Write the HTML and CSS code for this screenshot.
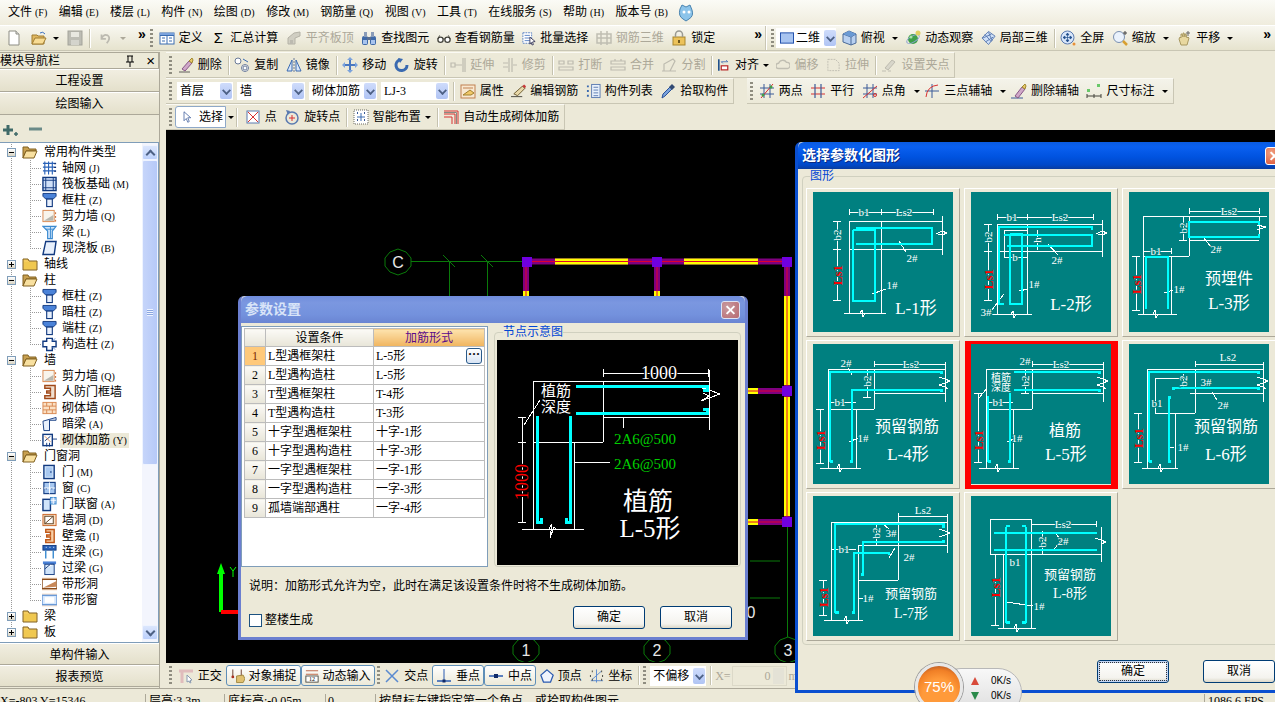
FILE: index.html
```html
<!DOCTYPE html>
<html lang="zh-CN">
<head>
  <meta charset="UTF-8">
  <title>钢筋算量</title>
  <link rel="stylesheet" href="styles.css">
</head>
<body>

<!-- icon set -->
<svg class="defs">
  <defs>
    <!-- top toolbar -->
    <g id="i-new"><path d="M3 1h7l3 3v11H3z" fill="#fff" stroke="#8d8d84"/><path d="M10 1v3h3" fill="#ddd" stroke="#8d8d84"/></g>
    <g id="i-open"><path d="M1 5h5l1 1h6v8H1z" fill="#e0b860" stroke="#a07c30"/><path d="M1 14l3-6h11l-3 6z" fill="#f8dc94" stroke="#a07c30"/><path d="M9 3q3-2 5 1" fill="none" stroke="#3a70c0"/></g>
    <g id="i-save"><rect x="1" y="1" width="14" height="14" fill="#bdbdb4" stroke="#a3a39a"/><rect x="4" y="2" width="8" height="5" fill="#e8e8e0"/><rect x="4" y="10" width="8" height="5" fill="#d4d4cc"/></g>
    <g id="i-undo"><path d="M4 4v5h5" fill="none" stroke="#bcbab0" stroke-width="2"/><path d="M4 8q3-5 7-3 3 2 1 6l-2 3" fill="none" stroke="#bcbab0" stroke-width="2"/></g>
    <g id="i-def"><rect x="1" y="3" width="14" height="11" fill="#fff" stroke="#3a6cb0"/><path d="M1 5.500h14M8 3v11M3 8h3M3 11h3M10 8h3M10 11h3" stroke="#3a6cb0"/><rect x="1" y="3" width="14" height="2" fill="#7aa2dc"/></g>
    <g id="i-flush"><path d="M2 14V8l6-5 6-1v4l-5 2v6z" fill="#d0cec2" stroke="#b4b2a6"/><path d="M4 10h3v4H4z" fill="#bcbab0"/></g>
    <g id="i-find"><rect x="1" y="6" width="6" height="9" rx="2" fill="#3f6aa8"/><rect x="9" y="6" width="6" height="9" rx="2" fill="#3f6aa8"/><rect x="3" y="2" width="3" height="5" fill="#8a9cb8"/><rect x="10" y="2" width="3" height="5" fill="#8a9cb8"/><rect x="6" y="7" width="4" height="3" fill="#5a6f90"/><rect x="2" y="10" width="4" height="4" fill="#a8c4ee"/><rect x="10" y="10" width="4" height="4" fill="#a8c4ee"/></g>
    <g id="i-glass"><circle cx="4" cy="10" r="3" fill="#fff" stroke="#44443c" stroke-width="1.500"/><circle cx="12" cy="10" r="3" fill="#fff" stroke="#44443c" stroke-width="1.500"/><path d="M7 9h2M1 9l2-4M15 9l-2-4" stroke="#44443c"/></g>
    <g id="i-batch"><rect x="1" y="2" width="10" height="12" fill="#fff" stroke="#4a78c0" stroke-dasharray="2 1"/><path d="M3 5h6M3 8h6M3 11h6" stroke="#4a78c0"/><path d="M9 7l6 5-3 .5 1 3-1.500 .5-1-3-1.500 2z" fill="#fff" stroke="#335"/></g>
    <g id="i-r3d"><path d="M1 4h14v9H1zM1 8h14M5 1v14M11 1v14" fill="none" stroke="#c0beb2" stroke-width="1.500"/></g>
    <g id="i-lock"><rect x="2" y="7" width="12" height="8" fill="#ecc25a" stroke="#a8862e"/><path d="M4.500 7V4.500a3.500 3.500 0 0 1 7 0V7" fill="none" stroke="#9a9a92" stroke-width="1.500"/><rect x="7" y="10" width="2" height="3" fill="#70581c"/></g>
    <g id="i-2d"><rect x="1" y="2" width="14" height="11" fill="#a8c4f0" stroke="#1a4aa8"/></g>
    <g id="i-top"><path d="M8 1l7 3v9l-5 2-8-3V4z" fill="#b8d0f0" stroke="#4a6a98"/><path d="M2 4l8 3 5-3M10 7v8" fill="none" stroke="#4a6a98"/><path d="M2 4l6-3 7 3-5 3z" fill="#6a9ad4"/></g>
    <g id="i-orbit"><ellipse cx="8" cy="9" rx="5" ry="5" fill="#3fa048"/><ellipse cx="8" cy="9" rx="7" ry="3" fill="none" stroke="#88a0d0" transform="rotate(-30 8 9)"/><circle cx="13" cy="3" r="2.500" fill="#e0d060"/><circle cx="6" cy="7" r="1.500" fill="#a8e0a8"/></g>
    <g id="i-local"><path d="M8 1l7 5-7 9-7-7z" fill="#cfe0f8" stroke="#5a7ab0"/><path d="M4 4l7 8M8 2l4 9M2 8l9-4M5 12l8-5" stroke="#5a7ab0"/></g>
    <g id="i-full"><circle cx="7.500" cy="7.500" r="6.500" fill="#d8e6fa" stroke="#5a7ab0"/><path d="M7.500 3v9M3 7.500h9M7.500 3l-1.500 2h3zM7.500 12l-1.500-2h3zM3 7.500l2-1.500v3zM12 7.500l-2-1.500v3z" fill="#24508c" stroke="#24508c" stroke-width=".7"/><circle cx="14" cy="14" r="1.500" fill="#e89038"/></g>
    <g id="i-zoom"><circle cx="7" cy="7" r="5.500" fill="#eaf2fc" stroke="#7a90b0"/><path d="M11 11l4 4" stroke="#d8a030" stroke-width="2.500"/><path d="M13 1v4M11 3h4" stroke="#444"/></g>
    <g id="i-pan"><path d="M3 9l1-2 1 1V4l1 0 1 3V3l1 0 1 4V4l1 0 1 4 1-1 1 1-2 7H5z" fill="#e8d8a0" stroke="#a89860"/><path d="M12 1v5M10 3h4" stroke="#666"/></g>
    <!-- edit toolbar -->
    <g id="i-del"><path d="M1 15h11" stroke="#60605a"/><path d="M4 12l7-8 3 2-7 8z" fill="#d0a8c8" stroke="#885888"/><path d="M11 4l3-3 1 2-1 3z" fill="#e8c868" stroke="#a08830"/></g>
    <g id="i-copy"><circle cx="4" cy="4" r="3" fill="#fff" stroke="#6a7a98"/><circle cx="11" cy="11" r="3.500" fill="#fff" stroke="#6a7a98"/><circle cx="11" cy="11" r="2" fill="none" stroke="#6a7a98"/><path d="M9 2l5 3" stroke="#3a6ab0"/></g>
    <g id="i-mirror"><path d="M8 1v14" stroke="#6a7a98" stroke-dasharray="2 1"/><path d="M6 3L1 14h5zM10 3l5 11h-5z" fill="#d8e6fa" stroke="#3a6ab0"/></g>
    <g id="i-move"><path d="M8 1v14M1 8h14" stroke="#4a78c0" stroke-width="2"/><path d="M8 0l-3 3h6zM8 16l-3-3h6zM0 8l3-3v6zM16 8l-3-3v6z" fill="#7aa2dc"/></g>
    <g id="i-rot"><path d="M13 8a5.500 5.500 0 1 1-7-5.200" fill="none" stroke="#3a6ab0" stroke-width="3"/><path d="M4 1l5 1-3 4z" fill="#3a6ab0"/></g>
    <g id="i-ext" fill="none" stroke="#bdbbaf"><path d="M13 1v14M15 1v14M1 6h4v4H1zM5 8h7" stroke-width="1.200"/></g>
    <g id="i-trim" fill="none" stroke="#bdbbaf"><path d="M7 1v14M10 1v14M1 6h5M1 10h5M11 8h4" stroke-width="1.200"/></g>
    <g id="i-break" fill="none" stroke="#bdbbaf"><path d="M1 4h5v3H1zM10 4h5v3h-5zM1 10h14v3H1z" stroke-width="1.200"/></g>
    <g id="i-merge" fill="none" stroke="#bdbbaf"><path d="M1 4h14v3H1zM1 10h14v3H1zM5 2v2M11 2v2" stroke-width="1.200"/></g>
    <g id="i-split" fill="none" stroke="#bdbbaf"><path d="M1 14h14M3 14V7l9-5 2 2-5 10" stroke-width="1.200"/></g>
    <g id="i-align"><path d="M1 1v14" stroke="#20508c" stroke-width="2"/><path d="M4 4h8l-2-2M4 4l2 2" fill="none" stroke="#3a6ab0"/><rect x="4" y="9" width="8" height="5" fill="#fff" stroke="#b82828" stroke-width="1.500"/></g>
    <g id="i-offset"><path d="M3 12a3 3 0 0 1 0-6 5 5 0 0 1 9-1 3.500 3.500 0 0 1 1 7z" fill="none" stroke="#c0beb2" stroke-width="1.500"/></g>
    <g id="i-stretch"><path d="M2 2h8l4 4v8H2z" fill="none" stroke="#c0beb2" stroke-dasharray="2 1"/></g>
    <g id="i-gripdot"><path d="M1 14h4M7 14h3" stroke="#c0beb2"/><path d="M4 11l7-8 3 2-7 8z" fill="#d8d6ca" stroke="#bdbbaf"/></g>
    <!-- property toolbar -->
    <g id="i-prop"><rect x="1" y="2" width="14" height="13" fill="#f8e8d0" stroke="#c08050"/><path d="M3 5h10" stroke="#c08050"/><path d="M3 12l7-5 4 3-3 2z" fill="#f0c868" stroke="#a08030"/></g>
    <g id="i-edit"><path d="M0 14h12" stroke="#44443c"/><path d="M3 11L12 3l3 2-8 8z" fill="#e8d8a8" stroke="#6a5a30"/><path d="M12 3l2-2 2 2-1 2z" fill="#c83838"/></g>
    <g id="i-list"><path d="M1 3h2M1 8h2M1 13h2" stroke="#3a6ab0" stroke-width="2"/><rect x="6" y="1" width="9" height="14" fill="#eaf2fc" stroke="#5a7ab0"/><path d="M8 4h5M8 7h5M8 10h5M8 13h5" stroke="#5a7ab0"/></g>
    <g id="i-pick"><path d="M2 15l1-4 7-7 2 2-7 7z" fill="#7aa2dc" stroke="#2a5298"/><path d="M9 4l3-3 3 3-3 3z" fill="#324a72"/></g>
    <g id="i-2pt"><path d="M1 5h14M1 11h14M5 1v14M11 1v14" stroke="#3a5a98"/><path d="M2 15L14 1" stroke="#d83030"/><circle cx="4" cy="12" r="1.500" fill="#3fa048"/><circle cx="12" cy="4" r="1.500" fill="#3fa048"/></g>
    <g id="i-par"><path d="M1 5h14M1 11h14" stroke="#d83030" stroke-width="1.200"/><path d="M5 1v14M11 1v14" stroke="#3a5a98" stroke-width="1.200"/></g>
    <g id="i-ang"><path d="M1 5h14M1 11h14M5 1v14M11 1v14" stroke="#3a5a98"/><path d="M1 15L15 3" stroke="#d83030"/><circle cx="13" cy="12" r="1.500" fill="none" stroke="#d83030"/></g>
    <g id="i-3pt"><path d="M1 8h14M8 1v14" stroke="#3a5a98"/><path d="M2 14Q3 3 14 2" fill="none" stroke="#d83030"/></g>
    <g id="i-delaux"><path d="M0 15h12" stroke="#3a5a98"/><path d="M4 13l7-9 3 2-7 9z" fill="#d0a8c8" stroke="#885888"/><path d="M11 4l3-3 1 2-1 3z" fill="#e8c868" stroke="#a08830"/></g>
    <g id="i-dim"><rect x="1" y="6" width="3" height="3" fill="#6ac86a"/><rect x="11" y="1" width="3" height="3" fill="#6ac86a"/><path d="M1 13h14M1 11v4M15 11v4M8 11v4" stroke="#44443c"/></g>
    <!-- draw toolbar -->
    <g id="i-cursor"><path d="M4 1v12l3-3 2 5 2-1-2-5h4z" fill="#fff" stroke="#3a5a98"/></g>
    <g id="i-pt"><rect x="2" y="2" width="12" height="12" fill="#fff" stroke="#5a7ab0"/><path d="M3 3l10 10M13 3L3 13" stroke="#d83030"/></g>
    <g id="i-rotpt"><circle cx="8" cy="9" r="6" fill="none" stroke="#5a7ab0" stroke-width="1.500"/><path d="M8 6v6M5 9h6" stroke="#d83030"/><path d="M2 1l4 1-2 4z" fill="#5a7ab0"/></g>
    <g id="i-smart"><rect x="1" y="1" width="14" height="14" fill="#fff" stroke="#6a6a62" stroke-dasharray="1 1"/><path d="M8 4v8M4 8h8" stroke="#3a6ab0"/><path d="M4 4h1M11 4h1M4 11h1M11 11h1" stroke="#3a5a98" stroke-width="2"/></g>
    <g id="i-auto"><path d="M1 2h14M15 2v13M1 5h11M12 5v10M1 8h8M9 8v7" fill="none" stroke="#d83030"/><path d="M1 3.500h12.500M13.500 3.500V15" fill="none" stroke="#8a8a82"/></g>
    <!-- snap toolbar -->
    <g id="i-ortho"><path d="M1 3h14M4 3v12" stroke="#e0bcbc" stroke-width="3"/><path d="M9 7l5 5-2 .5 1 2-1 .5-1-2-2 1z" fill="#fff" stroke="#8a9ab0"/></g>
    <g id="i-snap"><path d="M3 1v8M12 1v8" stroke="#6a3a2a"/><circle cx="3" cy="9" r="1.500" fill="#a83020"/><circle cx="12" cy="9" r="1.500" fill="#a83020"/><path d="M7 8l7-1 2 4-2 4H7z" fill="#e0c070" stroke="#a08840"/></g>
    <g id="i-dyn"><path d="M1 2h14M1 6h14" stroke="#b85838"/><rect x="1" y="8" width="14" height="7" fill="#fff" stroke="#44443c"/><text x="8" y="14" class="icon-num">12</text></g>
    <g id="i-x"><path d="M2 2l12 12M14 2L2 14" stroke="#5a8ad0" stroke-width="1.500"/></g>
    <g id="i-perp"><path d="M1 13h14" stroke="#2a5ab0" stroke-width="1.500"/><path d="M8 1v12" stroke="#2a5ab0"/><rect x="6.500" y="11.500" width="3" height="3" fill="#102a68"/></g>
    <g id="i-mid"><path d="M1 8h14" stroke="#2a5ab0" stroke-width="1.500"/><rect x="6" y="6" width="4" height="4" fill="#102a68"/></g>
    <g id="i-vert"><path d="M8 1l7 6-3 8H4L1 7z" fill="#f0f4fc" stroke="#2a5ab0" stroke-width="1.500"/></g>
    <g id="i-coord"><path d="M2 13h13M8 1v14" stroke="#5a8ad0"/><path d="M3 12L13 3" stroke="#5a8ad0"/><path d="M3 3h1M13 3h1M3 12h1M13 12h1M1 8h1M14 8h1" stroke="#44443c" stroke-width="2"/></g>
    <!-- tree -->
    <g id="t-open"><path d="M1 3h5l1 2h7v2H4l-3 7z" fill="#c8a050" stroke="#806020"/><path d="M1 14l3-7h11l-3 7z" fill="#f8e0a0" stroke="#806020"/></g>
    <g id="t-closed"><path d="M1 3h5l1 2h8v9H1z" fill="#f4cc60" stroke="#806020"/><path d="M2 6h12v7H2z" fill="#f0c850"/></g>
    <g id="t-grid"><path d="M1 3h14M1 7h14M1 11h14M3 1v14M7 1v14M11 1v14" stroke="#2a62b8" stroke-width="1.200"/><path d="M14 3v1M14 7v1M14 11v1" stroke="#102a68" stroke-width="2"/></g>
    <g id="t-raft"><rect x="1" y="1" width="14" height="14" fill="#d0e0f8" stroke="#123a80" stroke-width="1.500"/><path d="M1 4h14M1 12h14M4 1v14M12 1v14" stroke="#123a80"/></g>
    <g id="t-col"><path d="M1 1h14v3l-3 3H4L1 4z" fill="#4a82d8" stroke="#123a80"/><rect x="5" y="7" width="6" height="8" fill="#e8f0fc" stroke="#123a80" stroke-width="1.200"/></g>
    <g id="t-shear"><rect x="1" y="2" width="12" height="12" fill="#f8f4ec" stroke="#d88850"/><path d="M2 13l10-6v6z" fill="#b8b8b0"/><path d="M14.500 4v2M14.500 8v2M14.500 12v2" stroke="#c86020"/></g>
    <g id="t-beam"><path d="M1 2h14l-4 5v8H6V7z" fill="#d0e4fa" stroke="#3a8ad0" stroke-width="1.200"/><path d="M4 5h9M9 2v13" stroke="#3a8ad0"/></g>
    <g id="t-slab"><path d="M4 1h11l-2 14H1z" fill="#e8f0fc" stroke="#123a80" stroke-width="1.500"/></g>
    <g id="t-ccol"><path d="M5 2h6v3h4v6h-4v4H5v-4H1V5h4z" fill="#fff" stroke="#123a80" stroke-width="1.500"/><path d="M11 5l3-3M11 11l3 3" stroke="#5a8ad0"/></g>
    <g id="t-dwall"><path d="M3 1h11v14H3v-3h6V9H5V7h4V4H3z" fill="#f0e0d0" stroke="#a04818" stroke-width="1.500"/></g>
    <g id="t-brick"><rect x="1" y="2" width="14" height="12" fill="#fbe0c4" stroke="#d88850"/><path d="M1 6h14M1 10h14M5 2v4M11 2v4M8 6v4M5 10v4M11 10v4" stroke="#d88850"/></g>
    <g id="t-hbeam"><path d="M1 5L15 1v3H8v11H2z" fill="#e8f0fc" stroke="#123a80"/><path d="M8 4v11" stroke="#123a80"/></g>
    <g id="t-rebar"><rect x="1" y="2" width="10" height="12" fill="#fff" stroke="#123a80" stroke-width="1.500"/><path d="M3 9l6-5M11 7h5M5 11v4M8 11v4" stroke="#123a80"/><path d="M3 4l6 6" stroke="#d88850"/></g>
    <g id="t-door"><rect x="2" y="1" width="11" height="14" fill="#d0e4fa" stroke="#123a80" stroke-width="1.500"/><rect x="4" y="3" width="7" height="10" fill="#a8c8f0"/><rect x="9" y="7" width="1" height="2" fill="#123a80"/></g>
    <g id="t-win"><rect x="2" y="2" width="12" height="12" fill="#a8c8f0" stroke="#123a80" stroke-width="1.200"/><path d="M8 2v12M2 8h12" stroke="#fff"/><path d="M4 9h1M10 9h1" stroke="#123a80"/></g>
    <g id="t-dwin"><rect x="1" y="3" width="8" height="12" fill="#d0e4fa" stroke="#123a80" stroke-width="1.500"/><rect x="9" y="1" width="6" height="7" fill="#a8c8f0" stroke="#3a8ad0"/><path d="M12 1v7M9 4h6" stroke="#fff"/></g>
    <g id="t-hole"><rect x="1" y="2" width="14" height="12" fill="#fbe0c4" stroke="#c86020"/><rect x="3" y="4" width="9" height="8" fill="#fff" stroke="#604020"/><path d="M3 12l9-8" stroke="#604020"/></g>
    <g id="t-niche"><path d="M4 1h9v14H4v-3h5V9H5V7h4V4H4z" fill="#f8d0a8" stroke="#c05818" stroke-width="1.500"/></g>
    <g id="t-lbeam"><rect x="1" y="1" width="14" height="5" fill="#2a62b8" stroke="#123a80"/><path d="M4 6v9M12 6v9" stroke="#3a8ad0" stroke-width="1.500"/><path d="M4 3h1M8 3h1M12 3h1" stroke="#fff"/></g>
    <g id="t-lintel"><rect x="1" y="1" width="14" height="3" fill="#4a82d8"/><rect x="3" y="4" width="10" height="11" fill="#d0e4fa" stroke="#123a80"/><path d="M3 9l6-5h4" fill="#fff" stroke="#123a80"/></g>
    <g id="t-bandh"><rect x="0" y="1" width="16" height="14" fill="#fbe6d4"/><rect x="0" y="3" width="16" height="10" fill="#fff" stroke="#8a4a18" stroke-width="1.500"/><path d="M1 12L15 5v6z" fill="#c88858"/></g>
    <g id="t-bandw"><rect x="0" y="1" width="16" height="14" fill="#fbe6d4"/><rect x="0" y="3" width="16" height="10" fill="#d8e8fc" stroke="#6a9ad8" stroke-width="1.500"/><rect x="3" y="5" width="10" height="6" fill="#fff"/></g>
  </defs>
</svg>

<div class="app">
  <nav class="menubar">
    <span>文件 <i>(F)</i></span><span>编辑 <i>(E)</i></span><span>楼层 <i>(L)</i></span><span>构件 <i>(N)</i></span><span>绘图 <i>(D)</i></span><span>修改 <i>(M)</i></span><span>钢筋量 <i>(Q)</i></span><span>视图 <i>(V)</i></span><span>工具 <i>(T)</i></span><span>在线服务 <i>(S)</i></span><span>帮助 <i>(H)</i></span><span>版本号 <i>(B)</i></span>
    <svg class="logo" width="18" height="18" viewBox="0 0 18 18"><path d="M3 5l2-4 4 2 4-2 2 5q2 6-3 9l-3 2-3-2Q1 12 3 5z" fill="#8cc4ea" stroke="#4a84b0"/><circle cx="7" cy="8" r="1.500" fill="#fff"/><circle cx="12" cy="8" r="1.500" fill="#fff"/></svg>
  </nav>

  <!-- main toolbar -->
  <div class="topbar">
    <div class="top-left">
      <div class="quick">
        <svg width="16" height="16" viewBox="0 0 16 16"><use href="#i-new"/></svg>
        <svg width="18" height="16" viewBox="0 0 16 16"><use href="#i-open"/></svg>
        <i class="arrow tight"></i>
        <svg width="16" height="16" viewBox="0 0 16 16"><use href="#i-save"/></svg>
        <b class="sep tight"></b>
        <svg width="14" height="16" viewBox="0 0 16 16"><use href="#i-undo"/></svg>
        <i class="arrow dim"></i>
        <span class="more">»</span>
      </div>
      <b class="grip"></b>
      <div class="tool"><svg width="16" height="16" viewBox="0 0 16 16"><use href="#i-def"/></svg><span>定义</span></div>
      <div class="tool"><span class="sigma">Σ</span><span>汇总计算</span></div>
      <div class="tool off"><svg width="16" height="16" viewBox="0 0 16 16"><use href="#i-flush"/></svg><span>平齐板顶</span></div>
      <div class="tool"><svg width="16" height="16" viewBox="0 0 16 16"><use href="#i-find"/></svg><span>查找图元</span></div>
      <div class="tool"><svg width="14" height="16" viewBox="0 0 16 16"><use href="#i-glass"/></svg><span>查看钢筋量</span></div>
      <div class="tool"><svg width="14" height="16" viewBox="0 0 16 16"><use href="#i-batch"/></svg><span>批量选择</span></div>
      <div class="tool off"><svg width="16" height="16" viewBox="0 0 16 16"><use href="#i-r3d"/></svg><span>钢筋三维</span></div>
      <div class="tool"><svg width="16" height="16" viewBox="0 0 16 16"><use href="#i-lock"/></svg><span>锁定</span></div>
      <span class="more end">»</span>
    </div>
    <div class="top-right">
      <b class="grip"></b>
      <div class="select view-select">
        <svg width="16" height="14" viewBox="0 0 16 15"><use href="#i-2d"/></svg><span class="value">二维</span><i class="drop-btn"></i>
      </div>
      <div class="tool"><svg width="16" height="16" viewBox="0 0 16 16"><use href="#i-top"/></svg><span>俯视</span><i class="arrow roomy"></i></div>
      <div class="tool"><svg width="16" height="16" viewBox="0 0 16 16"><use href="#i-orbit"/></svg><span>动态观察</span></div>
      <div class="tool"><svg width="15" height="16" viewBox="0 0 16 16"><use href="#i-local"/></svg><span>局部三维</span></div>
      <b class="sep"></b>
      <div class="tool"><svg width="16" height="16" viewBox="0 0 16 16"><use href="#i-full"/></svg><span>全屏</span></div>
      <div class="tool"><svg width="16" height="16" viewBox="0 0 16 16"><use href="#i-zoom"/></svg><span>缩放</span><i class="arrow roomy"></i></div>
      <div class="tool"><svg width="16" height="16" viewBox="0 0 16 16"><use href="#i-pan"/></svg><span>平移</span><i class="arrow roomy"></i></div>
      <span class="more far">»</span>
    </div>
  </div>

  <div class="workspace">
    <!-- module navigation -->
    <aside class="nav">
      <header class="nav-head">
        <span class="nav-title">模块导航栏</span>
        <svg class="pin" width="10" height="12" viewBox="0 0 10 12"><path d="M2 1h6M3 1v6M7 1v6M1 7h8M5 7v5" stroke="#000" fill="none"/></svg>
        <span class="nav-close">×</span>
      </header>
      <div class="nav-btn">工程设置</div>
      <div class="nav-btn">绘图输入</div>
      <div class="nav-tools">
        <svg width="17" height="14" viewBox="0 0 17 14"><path d="M5 2v10M0 7h10" stroke="#3f6a68" stroke-width="3"/><path d="M13 9v4M11 11h4" stroke="#3f6a68" stroke-width="1.500"/></svg>
        <svg width="15" height="14" viewBox="0 0 15 14"><path d="M1 6h13" stroke="#6a8a88" stroke-width="3"/></svg>
      </div>
      <div class="tree-box">
        <ul class="tree">
          <li class="node"><div class="row"><i class="exp"></i><svg width="16" height="16" viewBox="0 0 16 16"><use href="#t-open"/></svg><span>常用构件类型</span></div>
            <ul>
              <li class="leaf"><svg width="15" height="16" viewBox="0 0 16 16"><use href="#t-grid"/></svg><span>轴网 <i>(J)</i></span></li>
              <li class="leaf"><svg width="15" height="16" viewBox="0 0 16 16"><use href="#t-raft"/></svg><span>筏板基础 <i>(M)</i></span></li>
              <li class="leaf"><svg width="15" height="16" viewBox="0 0 16 16"><use href="#t-col"/></svg><span>框柱 <i>(Z)</i></span></li>
              <li class="leaf"><svg width="15" height="16" viewBox="0 0 16 16"><use href="#t-shear"/></svg><span>剪力墙 <i>(Q)</i></span></li>
              <li class="leaf"><svg width="15" height="16" viewBox="0 0 16 16"><use href="#t-beam"/></svg><span>梁 <i>(L)</i></span></li>
              <li class="leaf"><svg width="15" height="16" viewBox="0 0 16 16"><use href="#t-slab"/></svg><span>现浇板 <i>(B)</i></span></li>
            </ul>
          </li>
          <li class="node"><div class="row"><i class="exp plus"></i><svg width="16" height="16" viewBox="0 0 16 16"><use href="#t-closed"/></svg><span>轴线</span></div></li>
          <li class="node"><div class="row"><i class="exp"></i><svg width="16" height="16" viewBox="0 0 16 16"><use href="#t-open"/></svg><span>柱</span></div>
            <ul>
              <li class="leaf"><svg width="15" height="16" viewBox="0 0 16 16"><use href="#t-col"/></svg><span>框柱 <i>(Z)</i></span></li>
              <li class="leaf"><svg width="15" height="16" viewBox="0 0 16 16"><use href="#t-col"/></svg><span>暗柱 <i>(Z)</i></span></li>
              <li class="leaf"><svg width="15" height="16" viewBox="0 0 16 16"><use href="#t-col"/></svg><span>端柱 <i>(Z)</i></span></li>
              <li class="leaf"><svg width="15" height="16" viewBox="0 0 16 16"><use href="#t-ccol"/></svg><span>构造柱 <i>(Z)</i></span></li>
            </ul>
          </li>
          <li class="node"><div class="row"><i class="exp"></i><svg width="16" height="16" viewBox="0 0 16 16"><use href="#t-open"/></svg><span>墙</span></div>
            <ul>
              <li class="leaf"><svg width="15" height="16" viewBox="0 0 16 16"><use href="#t-shear"/></svg><span>剪力墙 <i>(Q)</i></span></li>
              <li class="leaf"><svg width="15" height="16" viewBox="0 0 16 16"><use href="#t-dwall"/></svg><span>人防门框墙</span></li>
              <li class="leaf"><svg width="15" height="16" viewBox="0 0 16 16"><use href="#t-brick"/></svg><span>砌体墙 <i>(Q)</i></span></li>
              <li class="leaf"><svg width="15" height="16" viewBox="0 0 16 16"><use href="#t-hbeam"/></svg><span>暗梁 <i>(A)</i></span></li>
              <li class="leaf"><svg width="15" height="16" viewBox="0 0 16 16"><use href="#t-rebar"/></svg><span class="current">砌体加筋 <i>(Y)</i></span></li>
            </ul>
          </li>
          <li class="node"><div class="row"><i class="exp"></i><svg width="16" height="16" viewBox="0 0 16 16"><use href="#t-open"/></svg><span>门窗洞</span></div>
            <ul>
              <li class="leaf"><svg width="15" height="16" viewBox="0 0 16 16"><use href="#t-door"/></svg><span>门 <i>(M)</i></span></li>
              <li class="leaf"><svg width="15" height="16" viewBox="0 0 16 16"><use href="#t-win"/></svg><span>窗 <i>(C)</i></span></li>
              <li class="leaf"><svg width="15" height="16" viewBox="0 0 16 16"><use href="#t-dwin"/></svg><span>门联窗 <i>(A)</i></span></li>
              <li class="leaf"><svg width="15" height="16" viewBox="0 0 16 16"><use href="#t-hole"/></svg><span>墙洞 <i>(D)</i></span></li>
              <li class="leaf"><svg width="15" height="16" viewBox="0 0 16 16"><use href="#t-niche"/></svg><span>壁龛 <i>(I)</i></span></li>
              <li class="leaf"><svg width="15" height="16" viewBox="0 0 16 16"><use href="#t-lbeam"/></svg><span>连梁 <i>(G)</i></span></li>
              <li class="leaf"><svg width="15" height="16" viewBox="0 0 16 16"><use href="#t-lintel"/></svg><span>过梁 <i>(G)</i></span></li>
              <li class="leaf"><svg width="15" height="16" viewBox="0 0 16 16"><use href="#t-bandh"/></svg><span>带形洞</span></li>
              <li class="leaf"><svg width="15" height="16" viewBox="0 0 16 16"><use href="#t-bandw"/></svg><span>带形窗</span></li>
            </ul>
          </li>
          <li class="node"><div class="row"><i class="exp plus"></i><svg width="16" height="16" viewBox="0 0 16 16"><use href="#t-closed"/></svg><span>梁</span></div></li>
          <li class="node"><div class="row"><i class="exp plus"></i><svg width="16" height="16" viewBox="0 0 16 16"><use href="#t-closed"/></svg><span>板</span></div></li>
        </ul>
        <div class="scrollbar">
          <div class="sb-btn up"></div>
          <div class="sb-thumb"><i></i></div>
          <div class="sb-track"></div>
          <div class="sb-btn down"></div>
        </div>
      </div>
      <div class="nav-btn low">单构件输入</div>
      <div class="nav-btn low">报表预览</div>
    </aside>
    <div class="splitter"></div>

    <div class="center">
      <div class="bar-row">
        <div class="bar">
          <b class="grip"></b>
          <div class="tool"><svg width="16" height="16" viewBox="0 0 16 16"><use href="#i-del"/></svg><span>删除</span></div>
          <b class="sep"></b>
          <div class="tool"><svg width="16" height="16" viewBox="0 0 16 16"><use href="#i-copy"/></svg><span>复制</span></div>
          <div class="tool"><svg width="16" height="16" viewBox="0 0 16 16"><use href="#i-mirror"/></svg><span>镜像</span></div>
          <b class="sep"></b>
          <div class="tool"><svg width="16" height="16" viewBox="0 0 16 16"><use href="#i-move"/></svg><span>移动</span></div>
          <div class="tool"><svg width="16" height="16" viewBox="0 0 16 16"><use href="#i-rot"/></svg><span>旋转</span></div>
          <b class="sep"></b>
          <div class="tool off"><svg width="16" height="16" viewBox="0 0 16 16"><use href="#i-ext"/></svg><span>延伸</span></div>
          <div class="tool off"><svg width="16" height="16" viewBox="0 0 16 16"><use href="#i-trim"/></svg><span>修剪</span></div>
          <b class="sep"></b>
          <div class="tool off"><svg width="16" height="16" viewBox="0 0 16 16"><use href="#i-break"/></svg><span>打断</span></div>
          <div class="tool off"><svg width="16" height="16" viewBox="0 0 16 16"><use href="#i-merge"/></svg><span>合并</span></div>
          <div class="tool off"><svg width="16" height="16" viewBox="0 0 16 16"><use href="#i-split"/></svg><span>分割</span></div>
          <b class="sep"></b>
          <div class="tool"><svg width="13" height="16" viewBox="0 0 16 16"><use href="#i-align"/></svg><span>对齐</span><i class="arrow near"></i></div>
          <div class="tool off"><svg width="14" height="16" viewBox="0 0 16 16"><use href="#i-offset"/></svg><span>偏移</span></div>
          <div class="tool off"><svg width="15" height="16" viewBox="0 0 16 16"><use href="#i-stretch"/></svg><span>拉伸</span></div>
          <b class="sep"></b>
          <div class="tool off"><svg width="16" height="16" viewBox="0 0 16 16"><use href="#i-gripdot"/></svg><span>设置夹点</span></div>
        </div>
      </div>

      <div class="bar-row">
        <div class="bar">
          <b class="grip"></b>
          <div class="select-group">
            <div class="select w56"><span class="value">首层</span><i class="drop-btn"></i></div>
            <div class="select w68"><span class="value">墙</span><i class="drop-btn"></i></div>
            <div class="select w68"><span class="value">砌体加筋</span><i class="drop-btn"></i></div>
            <div class="select w68"><span class="value">LJ-3</span><i class="drop-btn"></i></div>
          </div>
          <b class="sep"></b>
          <div class="tool"><svg width="16" height="16" viewBox="0 0 16 16"><use href="#i-prop"/></svg><span>属性</span></div>
          <div class="tool"><svg width="15" height="16" viewBox="0 0 16 16"><use href="#i-edit"/></svg><span>编辑钢筋</span></div>
          <div class="tool"><svg width="15" height="16" viewBox="0 0 16 16"><use href="#i-list"/></svg><span>构件列表</span></div>
          <div class="tool"><svg width="16" height="16" viewBox="0 0 16 16"><use href="#i-pick"/></svg><span>拾取构件</span></div>
        </div>
        <div class="bar aux">
          <b class="grip"></b>
          <div class="tool"><svg width="16" height="16" viewBox="0 0 16 16"><use href="#i-2pt"/></svg><span>两点</span></div>
          <div class="tool"><svg width="16" height="16" viewBox="0 0 16 16"><use href="#i-par"/></svg><span>平行</span></div>
          <div class="tool"><svg width="16" height="16" viewBox="0 0 16 16"><use href="#i-ang"/></svg><span>点角</span><i class="arrow"></i></div>
          <div class="tool"><svg width="16" height="16" viewBox="0 0 16 16"><use href="#i-3pt"/></svg><span>三点辅轴</span><i class="arrow"></i></div>
          <div class="tool"><svg width="16" height="16" viewBox="0 0 16 16"><use href="#i-delaux"/></svg><span>删除辅轴</span></div>
          <div class="tool"><svg width="16" height="16" viewBox="0 0 16 16"><use href="#i-dim"/></svg><span>尺寸标注</span><i class="arrow"></i></div>
        </div>
      </div>

      <div class="bar-row">
        <div class="bar">
          <b class="grip"></b>
          <div class="select-mode"><svg width="12" height="16" viewBox="0 0 16 16"><use href="#i-cursor"/></svg><span>选择</span></div>
          <i class="arrow mode"></i>
          <b class="sep"></b>
          <div class="tool gap-left"><svg width="16" height="16" viewBox="0 0 16 16"><use href="#i-pt"/></svg><span>点</span></div>
          <div class="tool"><svg width="16" height="16" viewBox="0 0 16 16"><use href="#i-rotpt"/></svg><span>旋转点</span></div>
          <b class="sep"></b>
          <div class="tool"><svg width="16" height="16" viewBox="0 0 16 16"><use href="#i-smart"/></svg><span>智能布置</span><i class="arrow near"></i></div>
          <b class="sep"></b>
          <div class="tool"><svg width="16" height="16" viewBox="0 0 16 16"><use href="#i-auto"/></svg><span>自动生成砌体加筋</span></div>
        </div>
      </div>

      <!-- drawing area -->
      <div class="canvas">
        <svg width="629" height="532" viewBox="166 130 629 532">
          <g class="axis">
            <path d="M411 261.500H523M449.500 261V296M487.500 261V296M443 255l12 12M481 255l12 12"/>
            <path d="M526.500 638V640M657.500 638V640M787.500 527V637M750 561h30M750 598h30"/>
            <polygon points="398,249 406,252 411,258 411,266 406,272 398,275 390,272 385,266 385,258 390,252"/>
            <polygon points="526,637 534,640 539,646 539,654 534,660 526,663 518,660 513,654 513,646 518,640"/>
            <polygon points="657,637 665,640 670,646 670,654 665,660 657,663 649,660 644,654 644,646 649,640"/>
            <polygon points="788,637 796,640 801,646 801,654 796,660 788,663 780,660 775,654 775,646 780,640"/>
          </g>
          <text class="grid-label" x="398" y="262">C</text>
          <text class="grid-label" x="526" y="650">1</text>
          <text class="grid-label" x="657" y="650">2</text>
          <text class="grid-label" x="788" y="650">3</text>
          <text class="grid-label" x="751" y="612">0</text>
          <!-- walls -->
          <path class="wall" d="M526 261.500H790M526 262V296M657 262V296M787 262V522M745 391H787M745 522H787"/>
          <path class="wall-y" d="M555 261.500H628M684 261.500H758M526 291V296M657 291V296M787 296V385M787 397V516M745 391H758M745 522H758"/>
          <path class="wall-r" d="M526 261.500H787M526 262V296M657 262V296M787 262V522M745 391H787M745 522H787"/>
          <rect class="col" x="522" y="257" width="10" height="10"/>
          <rect class="col" x="652" y="257" width="10" height="10"/>
          <rect class="col" x="782" y="257" width="10" height="10"/>
          <rect class="col" x="782" y="386" width="10" height="10"/>
          <rect class="col" x="782" y="517" width="10" height="10"/>
          <!-- ucs -->
          <path d="M221 612V572" stroke="#00ff00" stroke-width="4"/>
          <path d="M221 563l-4 11h8z" fill="#00ff00"/>
          <path d="M221 612H240" stroke="#ff0000" stroke-width="4"/>
          <path d="M230 567l3 4 3-4M233 571v6" stroke="#00ff00" fill="none"/>
        </svg>
      </div>

      <div class="bar snap-bar">
        <b class="grip"></b>
        <div class="tool"><svg width="16" height="16" viewBox="0 0 16 16"><use href="#i-ortho"/></svg><span>正交</span></div>
        <div class="tool on"><svg width="15" height="16" viewBox="0 0 16 16"><use href="#i-snap"/></svg><span>对象捕捉</span></div>
        <div class="tool on"><svg width="14" height="16" viewBox="0 0 16 16"><use href="#i-dyn"/></svg><span>动态输入</span></div>
        <b class="grip after-on"></b>
        <div class="tool"><svg width="16" height="16" viewBox="0 0 16 16"><use href="#i-x"/></svg><span>交点</span></div>
        <div class="tool on"><svg width="16" height="16" viewBox="0 0 16 16"><use href="#i-perp"/></svg><span>垂点</span></div>
        <div class="tool on"><svg width="16" height="16" viewBox="0 0 16 16"><use href="#i-mid"/></svg><span>中点</span></div>
        <div class="tool"><svg width="14" height="16" viewBox="0 0 16 16"><use href="#i-vert"/></svg><span>顶点</span></div>
        <div class="tool"><svg width="15" height="16" viewBox="0 0 16 16"><use href="#i-coord"/></svg><span>坐标</span></div>
        <b class="sep"></b>
        <b class="grip"></b>
        <div class="select w56 offset"><span class="value">不偏移</span><i class="drop-btn"></i></div>
        <b class="sep"></b>
        <span class="off-label">X=</span>
        <div class="spin"><span>0</span><i></i></div>
        <span class="off-label">m</span>
      </div>
    </div>
  </div>

  <footer class="statusbar">
    <span class="cell coords">X=-803 Y=15346</span>
    <span class="cell w79">层高:3.3m</span>
    <span class="cell w101">底标高:-0.05m</span>
    <span class="cell w50">0</span>
    <span class="cell hint">按鼠标左键指定第一个角点，或拾取构件图元</span>
    <span class="cell fps">1086.6 FPS</span>
  </footer>
</div>

<!-- parameter dialog -->
<section class="dialog param-dialog">
  <header class="title inactive"><span>参数设置</span><i class="close-btn"></i></header>
  <div class="param-main">
    <div class="table-panel">
      <table class="param-table">
        <thead>
          <tr><th class="no"></th><th>设置条件</th><th class="hot">加筋形式</th></tr>
        </thead>
        <tbody>
          <tr><td class="no current">1</td><td>L型遇框架柱</td><td><div class="cell-edit"><span>L-5形</span><b class="dots">···</b></div></td></tr>
          <tr><td class="no">2</td><td>L型遇构造柱</td><td>L-5形</td></tr>
          <tr><td class="no">3</td><td>T型遇框架柱</td><td>T-4形</td></tr>
          <tr><td class="no">4</td><td>T型遇构造柱</td><td>T-3形</td></tr>
          <tr><td class="no">5</td><td>十字型遇框架柱</td><td>十字-1形</td></tr>
          <tr><td class="no">6</td><td>十字型遇构造柱</td><td>十字-3形</td></tr>
          <tr><td class="no">7</td><td>一字型遇框架柱</td><td>一字-1形</td></tr>
          <tr><td class="no">8</td><td>一字型遇构造柱</td><td>一字-3形</td></tr>
          <tr><td class="no">9</td><td>孤墙端部遇柱</td><td>一字-4形</td></tr>
        </tbody>
      </table>
    </div>
    <fieldset class="group node-group">
      <legend>节点示意图</legend>
      <svg class="node-pic" width="241" height="225" viewBox="0 0 241 225">
        <path class="w" d="M106 33H211M106 29V37M211 29V37M36 41H212M36 41V189M106 41V102M36 102H106M77 102V189M106 77H212M212 30V90M25 189H87M126 77V88M77 122H113M25 77V182M21 77H29M21 102H29M21 182H29M27 85L43 60M52 189l3-5-2 14 4-11 2 2M205 48l7 2 11 4-19 7 8-5-6-3"/>
        <path class="c3" d="M79 46H210V50H206M79 73H210V69H206M40 76V182H44V178M73 76V182H69V178"/>
        <text class="label t15" x="59" y="51">植筋</text>
        <text class="label t15" x="59" y="67">深度</text>
        <text class="label t18" x="162" y="33">1000</text>
        <text class="label red t18" transform="rotate(-90 25 142)" x="25" y="142">1000</text>
        <text class="label green t15" x="148" y="99">2A6@500</text>
        <text class="label green t15" x="148" y="124">2A6@500</text>
        <text class="label t25" x="151" y="161">植筋</text>
        <text class="label t25" x="153" y="188">L-5形</text>
      </svg>
    </fieldset>
  </div>
  <p class="note">说明：加筋形式允许为空，此时在满足该设置条件时将不生成砌体加筋。</p>
  <div class="param-foot">
    <label class="check"><i></i><span>整楼生成</span></label>
    <span class="xp-btn">确定</span>
    <span class="xp-btn">取消</span>
  </div>
</section>

<!-- shape picker dialog -->
<section class="dialog shape-dialog">
  <header class="title"><span>选择参数化图形</span><i class="close-btn"></i></header>
  <fieldset class="group shape-group">
    <legend>图形</legend>
    <div class="shape-grid">
      <div class="shape">
        <svg width="140" height="140" viewBox="0 0 140 140">
          <path class="w" d="M36 20H120M36 17V23M68 17V23M120 17V23M36 29H129M36 57H129M36 29V121M68 29V121M31 121H73M129 24V63M24 29V108M20 29H28M20 57H28M20 108H28M47 121l2-3 1 7 2-4M123 42l6-3 5 2-5 2-4-1M86 49l7 11M59 102l14-5"/>
          <path class="c2" d="M43 36H119V52H43M40 38V109H62V38H40"/>
          <text class="label" x="51" y="20">b1</text><text class="label" x="91" y="20">Ls2</text>
          <text class="label" transform="rotate(-90 24 43)" x="24" y="43">b2</text>
          <text class="label red" transform="rotate(-90 24 83)" x="24" y="83">Ls1</text>
          <text class="label" x="99" y="66">2#</text><text class="label" x="79" y="93">1#</text>
          <text class="label t17" x="103" y="116">L-1形</text>
        </svg>
      </div>
      <div class="shape">
        <svg width="140" height="140" viewBox="0 0 140 140">
          <path class="w" d="M26 25H122M26 22V28M56 22V28M122 22V28M26 32H131M26 59H131M26 32V122M56 32V122M21 122H61M131 28V65M17 32V108M13 32H21M13 59H21M13 108H21M33 38H56M33 38V65M66 38V58M33 65H56M40 122l2-3 1 7 2-4M125 42l6-3 5 2-5 2-4-1M77 52l10 11M48 99l9-2M21 118l12-16"/>
          <path class="c2" d="M33 112H28V35H121V38M33 43H121V54H36M39 42V112H51V42H39"/>
          <text class="label" x="41" y="25">b1</text><text class="label" x="89" y="25">Ls2</text>
          <text class="label" transform="rotate(-90 17 45)" x="17" y="45">b2</text>
          <text class="label red" transform="rotate(-90 17 87)" x="17" y="87">Ls1</text>
          <text class="label" transform="rotate(-90 66 48)" x="66" y="48">h</text>
          <text class="label" x="44" y="65">b</text>
          <text class="label" x="86" y="68">2#</text><text class="label" x="63" y="92">1#</text><text class="label" x="15" y="120">3#</text>
          <text class="label t17" x="100" y="112">L-2形</text>
        </svg>
      </div>
      <div class="shape">
        <svg width="140" height="140" viewBox="0 0 140 140">
          <path class="w" d="M60 19H130M60 16V22M130 16V22M14 24H138M14 24V122M9 122H48M42 64V122M14 64H60M60 24V64M60 48H130M54 24V48M50 24H58M50 48H58M14 59H42M14 56V62M42 56V62M7 64V118M3 64H11M3 118H11M24 122l2-4 1 8 2-4M130 24V46M128 33l9 2-9 3M74 45l9 11M35 101l9-3"/>
          <path class="c2" d="M130 33V30H60V45H130V42M17 117V65H39V117"/>
          <text class="label" x="100" y="19">Ls2</text>
          <text class="label" transform="rotate(-90 54 36)" x="54" y="36">b2</text>
          <text class="label" x="27" y="59">b1</text>
          <text class="label red" transform="rotate(-90 7 92)" x="7" y="92">Ls1</text>
          <text class="label" x="87" y="57">2#</text><text class="label" x="50" y="97">1#</text>
          <text class="label t16" x="100" y="86">预埋件</text>
          <text class="label t17" x="100" y="111">L-3形</text>
        </svg>
      </div>
      <div class="shape">
        <svg width="140" height="140" viewBox="0 0 140 140">
          <path class="w" d="M61 20H132M61 17V23M132 18V58M15 25H132M15 25V124M61 25V65M15 65H61M43 65V124M61 49H132M7 124H48M24 124l2-4 1 8 2-4M54 25V53M50 53H58M15 58H43M7 65V119M3 65H11M3 119H11M35 24l4 7M36 98l9-4M126 33l6 2 5 2-5 2-6 2 6 2 3 2"/>
          <path class="c2" d="M17 118V28H129M39 118V46H129"/>
          <path class="hook" d="M17 116h3v3h-3zM37 116h3v3h-3zM127 27h3v3h-3zM127 45h3v3h-3z"/>
          <text class="label" x="98" y="20">Ls2</text><text class="label" x="33" y="19">2#</text>
          <text class="label" transform="rotate(-90 54 37)" x="54" y="37">b2</text>
          <text class="label" x="27" y="58">b1</text>
          <text class="label red" transform="rotate(-90 7 96)" x="7" y="96">Ls1</text>
          <text class="label" x="50" y="94">1#</text>
          <text class="label t16" x="94" y="82">预留钢筋</text>
          <text class="label t17" x="95" y="110">L-4形</text>
        </svg>
      </div>
      <div class="shape selected">
        <svg width="140" height="140" viewBox="0 0 140 140">
          <path class="w" d="M61 20H132M61 17V23M132 18V58M15 25H132M15 25V124M61 25V65M15 65H61M42 65V124M61 49H132M8 124H48M24 124l2-4 1 8 2-4M54 25V49M50 49H58M15 58H42M7 49V118M3 49H11M3 118H11M16 44L8 54M36 98l9-4M126 33l6 2 5 2-5 2-6 2 6 2 3 2"/>
          <path class="c2" d="M43 28H129M43 46H129M17 52V118M39 49V118"/>
          <path class="hook" d="M17 116h3v3h-3zM37 116h3v3h-3zM127 27h3v3h-3zM127 45h3v3h-3z"/>
          <text class="label" x="90" y="20">Ls2</text><text class="label" x="54" y="17">2#</text>
          <text class="label" transform="rotate(-90 54 37)" x="54" y="37">b2</text>
          <text class="label t10" x="30" y="33">植筋</text><text class="label t10" x="30" y="43">深度</text>
          <text class="label" x="27" y="58">b1</text>
          <text class="label red" transform="rotate(-90 7 96)" x="7" y="96">Ls1</text>
          <text class="label" x="46" y="94">1#</text>
          <text class="label t16" x="94" y="86">植筋</text>
          <text class="label t17" x="95" y="110">L-5形</text>
        </svg>
      </div>
      <div class="shape">
        <svg width="140" height="140" viewBox="0 0 140 140">
          <path class="w" d="M66 20H134M66 17V23M134 18V58M18 25H134M18 25V124M66 25V69M26 69H66M26 34V69M26 34H59M46 69V124M61 49H134M13 124H49M29 124l2-4 1 8 2-4M54 30V45M9 69V118M5 69H13M5 118H13M83 48l5 8M128 33l6 2 5 2-5 2-6 2 6 2 3 2M40 103h5"/>
          <path class="c2" d="M20 118V28H131M44 44H131M40 53V118"/>
          <path class="hook" d="M20 116h3v3h-3zM39 116h3v3h-3zM128 27h3v3h-3zM128 43h3v3h-3zM43 43h3v3h-3zM39 52h3v3h-3z"/>
          <text class="label" x="99" y="13">Ls2</text>
          <text class="label" transform="rotate(-90 54 37)" x="54" y="37">b2</text>
          <text class="label" x="28" y="59">b1</text>
          <text class="label" x="77" y="38">3#</text><text class="label" x="94" y="61">2#</text>
          <text class="label red" transform="rotate(-90 9 94)" x="9" y="94">Ls1</text>
          <text class="label" x="54" y="103">1#</text>
          <text class="label t16" x="97" y="82">预留钢筋</text>
          <text class="label t17" x="97" y="110">L-6形</text>
        </svg>
      </div>
      <div class="shape">
        <svg width="140" height="140" viewBox="0 0 140 140">
          <path class="w" d="M85 20H134M85 17V23M134 18V57M18 26H134M18 26V124M11 124H50M31 124l2-4 1 8 2-4M85 17V84M45 84H85M45 49V124M45 49H134M63 26V50M18 53H43M10 84V119M6 84H14M6 119H14M70 28l6 5M82 52l-6 10M45 102h5M126 33l6 2 5 2-5 2-6 2"/>
          <path class="c2" d="M22 117V28H132M50 79V46H132M41 117V57H77"/>
          <path class="hook" d="M22 115h4v3h-4zM39 115h3v3h-3zM129 27h3v5h-3zM129 44h3v3h-3zM48 77h3v3h-3zM75 56h2v3h-2z"/>
          <text class="label" x="110" y="14">Ls2</text>
          <text class="label" transform="rotate(-90 63 37)" x="63" y="37">b2</text>
          <text class="label" x="78" y="37">3#</text><text class="label" x="96" y="61">2#</text>
          <text class="label" x="31" y="53">b1</text>
          <text class="label red" transform="rotate(-90 10 101)" x="10" y="101">Ls1</text>
          <text class="label" x="55" y="102">1#</text>
          <text class="label t13" x="98" y="97">预留钢筋</text>
          <text class="label t14" x="98" y="117">L-7形</text>
        </svg>
      </div>
      <div class="shape">
        <svg width="140" height="140" viewBox="0 0 140 140">
          <path class="w" d="M19 23H60V58H19ZM60 58H130M60 28H125M125 25V31M130 31V66M32 58V132M60 58V132M27 132H65M43 132l2-4 1 8 2-4M71 35V58M24 58V129M20 129H28M35 106l27 4M85 38l5 6-8 11M124 42l6 2 5 2-5 2"/>
          <path class="c2" d="M35 31V127M55 31V127M23 37H126M23 54H126"/>
          <path class="hook" d="M35 29h4v2h-4zM51 29h4v2h-4zM35 125h4v3h-4zM51 125h4v3h-4z"/>
          <text class="label" x="92" y="28">Ls2</text>
          <text class="label" transform="rotate(-90 71 46)" x="71" y="46">b2</text>
          <text class="label" x="92" y="45">2#</text>
          <text class="label" x="44" y="66">b1</text>
          <text class="label red" transform="rotate(-90 24 91)" x="24" y="91">Ls1</text>
          <text class="label" x="68" y="110">1#</text>
          <text class="label t13" x="99" y="78">预留钢筋</text>
          <text class="label t14" x="99" y="97">L-8形</text>
        </svg>
      </div>
    </div>
  </fieldset>
  <div class="shape-foot">
    <span class="xp-btn focus">确定</span>
    <span class="xp-btn">取消</span>
  </div>
</section>

<!-- network meter -->
<div class="meter">
  <div class="meter-pill">
    <div class="rate"><i class="up"></i><span>0K/s</span></div>
    <div class="rate"><i class="down"></i><span>0K/s</span></div>
  </div>
  <div class="meter-ball"><span>75%</span></div>
</div>

</body>
</html>
```

FILE: styles.css
```css
/* General */
* {
  box-sizing: border-box;
}

html, body {
  margin: 0;
  padding: 0;
  height: 100%;
  overflow: hidden;
}

body {
  position: relative;
  width: 1275px;
  height: 702px;
  background: #ece9d8;
  color: #000;
  font-family: "Liberation Serif", "Noto Sans CJK SC", serif;
  font-size: 12px;
  line-height: 14px;
}

ul {
  margin: 0;
  padding: 0;
  list-style: none;
}

svg {
  display: block;
  flex: none;
}

.defs {
  display: none;
}

.icon-num {
  font-size: 7px;
  text-anchor: middle;
  fill: #000;
}

.app {
  display: flex;
  flex-direction: column;
  height: 702px;
}

/* Menu */
.menubar {
  display: flex;
  align-items: center;
  gap: 11.5px;
  height: 25px;
  padding: 0 0 0 8px;
  background: linear-gradient(#fbfbf6, #efecdd);
  white-space: nowrap;
}

.menubar i, .leaf span i {
  font-style: normal;
  font-size: 10px;
}

.logo {
  margin-left: -2px;
}

/* Shared toolbar pieces */
.topbar {
  display: flex;
  height: 26px;
  background: linear-gradient(#f8f7f0, #e6e3ce);
  border-top: 1px solid #fff;
  border-bottom: 1px solid #c9c6b4;
}

.top-left {
  display: flex;
  align-items: center;
  width: 766px;
}

.top-right {
  display: flex;
  align-items: center;
  flex: 1;
  border-left: 1px solid #fff;
  box-shadow: -1px 0 0 #c9c6b4;
  padding-left: 2px;
}

.quick {
  display: flex;
  align-items: center;
  gap: 8px;
  width: 150px;
  padding-left: 6px;
}

.tool {
  display: flex;
  align-items: center;
  gap: 4px;
  padding: 0 3.75px;
  white-space: nowrap;
}

.tool.off {
  color: #aca899;
}

.tool.on {
  height: 21px;
  padding: 0 3px;
  background: linear-gradient(#fff, #ece9d8);
  border: 1px solid #5f8fb8;
  border-radius: 3px;
}

.sigma {
  width: 16px;
  font-size: 15px;
  text-align: center;
  font-family: "Liberation Sans", sans-serif;
}

.grip {
  flex: none;
  width: 3px;
  height: 19px;
  margin: 0 2px;
  background: repeating-linear-gradient(#8f8d80 0 2px, transparent 2px 4px);
}

.top-left .grip {
  margin: 0 2px 0 0;
}

.sep {
  flex: none;
  width: 1px;
  height: 19px;
  margin: 0 2px;
  background: #c5c2af;
  box-shadow: 1px 0 0 #fff;
}

.sep.tight {
  margin: 0 0 0 -2px;
}

.arrow {
  flex: none;
  width: 0;
  height: 0;
  margin-left: 4px;
  margin-right: -3px;
  border-left: 3px solid transparent;
  border-right: 3px solid transparent;
  border-top: 3px solid #000;
}

.arrow.tight {
  margin: 0 0 0 -3px;
}

.arrow.dim {
  margin: 0;
  border-top-color: #aca899;
}

.arrow.near {
  margin: 0;
}

.arrow.roomy {
  margin-left: 3px;
  margin-right: 0;
}

.arrow.mode {
  margin: 0 0 0 2px;
}

.more {
  font-size: 14px;
  font-weight: bold;
  margin-top: -8px;
  font-family: "Liberation Sans", sans-serif;
}

.quick .more {
  margin-left: 4px;
}

.more.end {
  margin-left: auto;
  margin-right: 4px;
}

.more.far {
  margin-left: auto;
  margin-right: 4px;
}

/* Drop down boxes */
.select {
  display: flex;
  align-items: center;
  height: 18px;
  padding: 0 1px 0 3px;
  background: #fff;
}

.select .value {
  flex: 1;
  white-space: nowrap;
}

.drop-btn {
  position: relative;
  flex: none;
  width: 12px;
  height: 16px;
  background: linear-gradient(#cfdcfb, #b0c4f4);
  border-radius: 2px;
}

.drop-btn::after {
  content: "";
  position: absolute;
  left: 3px;
  top: 4px;
  width: 5px;
  height: 5px;
  border-right: 2px solid #4d6185;
  border-bottom: 2px solid #4d6185;
  transform: rotate(45deg) scale(.9);
}

.w56 {
  width: 56px;
}

.w68 {
  width: 68px;
}

.view-select {
  gap: 1px;
  width: 60px;
  height: 20px;
  margin-right: 1px;
}

.view-select .value {
  flex: none;
  width: 27px;
}

.select-group {
  display: flex;
  gap: 4px;
  margin: 0 2px 0 3px;
}

.select-mode {
  display: flex;
  align-items: center;
  gap: 6px;
  width: 51px;
  height: 22px;
  margin-left: 1px;
  padding-left: 5px;
  background: #fff;
  border: 1px solid #8ea8c8;
  border-radius: 3px 0 0 3px;
  white-space: nowrap;
}

.gap-left {
  margin-left: 2px;
}

/* Workspace */
.workspace {
  display: flex;
  height: 637px;
  padding-top: 1px;
}

.nav {
  display: flex;
  flex-direction: column;
  width: 160px;
  overflow: hidden;
  border-right: 1px solid #aca899;
}

.nav-head {
  display: flex;
  align-items: center;
  height: 17px;
  border: 1px solid #aca899;
  border-left: 0;
  background: #ece9d8;
}

.nav-title {
  flex: 1;
  white-space: nowrap;
}

.pin {
  margin-right: 11px;
}

.nav-close {
  margin-right: 3px;
  font-size: 15px;
  font-family: "Liberation Sans", sans-serif;
}

.nav-btn {
  height: 23px;
  line-height: 22px;
  text-align: center;
  background: linear-gradient(#f1eee1, #e4e0cb);
  border-top: 1px solid #fff;
  border-bottom: 1px solid #aca899;
}

.nav-btn.low {
  height: 22px;
}

.nav-tools {
  display: flex;
  align-items: center;
  gap: 8px;
  height: 27px;
  padding: 2px 0 0 3px;
}

.tree-box {
  display: flex;
  height: 501px;
  background: #fff;
  border: 1px solid #7f9db9;
  border-left: 0;
}

/* Tree */
.tree {
  flex: 1;
  padding-top: 1px;
  overflow: hidden;
}

.node {
  background: repeating-linear-gradient(#999 0 1px, transparent 1px 2px) 11px 0 / 1px 100% no-repeat;
}

.node:last-child {
  background-size: 1px 8px;
}

.row, .leaf {
  display: flex;
  align-items: center;
  height: 16px;
  white-space: nowrap;
}

.row {
  padding-left: 7px;
}

.row svg {
  margin: 0 6px 0 6px;
}

.exp {
  position: relative;
  flex: none;
  width: 9px;
  height: 9px;
  background: linear-gradient(#fff, #d8d4c4);
  border: 1px solid #7f9db9;
}

.exp::before {
  content: "";
  position: absolute;
  left: 1px;
  top: 3px;
  width: 5px;
  height: 1px;
  background: #000;
}

.exp.plus::after {
  content: "";
  position: absolute;
  left: 3px;
  top: 1px;
  width: 1px;
  height: 5px;
  background: #000;
}

.leaf {
  margin-left: 30px;
  padding-left: 12px;
  background:
    repeating-linear-gradient(#999 0 1px, transparent 1px 2px) 0 0 / 1px 100% no-repeat,
    repeating-linear-gradient(90deg, #999 0 1px, transparent 1px 2px) 0 50% / 12px 1px no-repeat;
}

.leaf:last-child {
  background-size: 1px 8px, 12px 1px;
}

.leaf svg {
  margin-right: 5px;
}

.current {
  margin: 0 -2px;
  padding: 0 2px;
  background: #ece9d8;
}

/* Scrollbar */
.scrollbar {
  display: flex;
  flex-direction: column;
  width: 16px;
  padding-top: 2px;
  padding-bottom: 2px;
  background: #f3f5fd;
}

.sb-btn {
  position: relative;
  height: 15px;
  background: linear-gradient(#dbe6fd, #bcd0fb);
  border: 1px solid #eef3ff;
  border-radius: 2px;
}

.sb-btn::after {
  content: "";
  position: absolute;
  left: 4px;
  width: 5px;
  height: 5px;
  border-right: 2px solid #4d6185;
  border-bottom: 2px solid #4d6185;
}

.sb-btn.up::after {
  top: 5px;
  transform: rotate(-135deg);
}

.sb-btn.down::after {
  top: 2px;
  transform: rotate(45deg);
}

.sb-thumb {
  display: flex;
  align-items: center;
  justify-content: center;
  height: 305px;
  background: linear-gradient(90deg, #c6d5fa, #b6c9f8);
  border: 1px solid #eef3ff;
  border-radius: 2px;
}

.sb-thumb i {
  width: 6px;
  height: 7px;
  background: repeating-linear-gradient(#eef3ff 0 1px, #8ba6e0 1px 2px);
}

.sb-track {
  flex: 1;
}

.splitter {
  width: 6px;
}

/* Center column */
.center {
  flex: 1;
  display: flex;
  flex-direction: column;
  min-width: 0;
}

.bar-row {
  display: flex;
  height: 26px;
}

.bar {
  display: flex;
  align-items: center;
  height: 26px;
  padding: 0 1px 0 1px;
  background: #ece9d8;
  border-top: 1px solid #fbfaf4;
  border-right: 1px solid #c9c6b4;
  border-bottom: 1px solid #c9c6b4;
}

.bar.aux {
  margin-left: 13px;
  padding-right: 4px;
  background: linear-gradient(#f4f3ea, #ece9d8);
}

.canvas {
  height: 533px;
  background: #000;
  overflow: hidden;
}

.axis {
  fill: none;
  stroke: #0a7a0a;
  stroke-width: 1;
}

.grid-label {
  fill: #e8e8e8;
  font-size: 16px;
  font-family: "Liberation Sans", sans-serif;
  text-anchor: middle;
  dominant-baseline: central;
}

.wall {
  fill: none;
  stroke: #800080;
  stroke-width: 6;
}

.wall-y {
  fill: none;
  stroke: #ffff00;
  stroke-width: 6;
}

.wall-r {
  fill: none;
  stroke: #e00030;
  stroke-width: 1;
}

.col {
  fill: #7000e0;
}

.snap-bar {
  height: 25px;
  border: 0;
}

.tool.on + .grip.after-on {
  margin-left: 2px;
  margin-right: 1px;
}

.offset {
  width: 56px;
  height: 20px;
  margin-left: 2px;
  margin-right: 2px;
}

.off-label {
  color: #aca899;
  margin: 0 1px 0 2px;
  white-space: nowrap;
}

.spin {
  display: flex;
  flex: none;
  align-items: center;
  justify-content: flex-end;
  gap: 2px;
  width: 55px;
  height: 20px;
  padding-right: 2px;
  color: #aca899;
  border: 1px solid #dcd9c8;
}

.spin i {
  width: 11px;
  height: 16px;
  background: #e4e2d6;
}

/* Status bar */
.statusbar {
  display: flex;
  height: 14px;
  padding-top: 5px;
  overflow: hidden;
  background: #ece9d8;
  border-top: 1px solid #aca899;
  white-space: nowrap;
}

.cell {
  flex: none;
  height: 20px;
  padding-left: 3px;
  border-left: 1px solid #aca899;
}

.coords {
  width: 145px;
  padding-left: 0;
  border-left: 0;
}

.w79 {
  width: 79px;
}

.w101 {
  width: 101px;
}

.w50 {
  width: 50px;
  padding-left: 2px;
}

.hint {
  width: 829px;
}

.fps {
  flex: 1;
}

/* Dialogs */
.dialog {
  position: absolute;
  display: flex;
  flex-direction: column;
  background: #ece9d8;
}

.title {
  display: flex;
  align-items: center;
  flex: none;
  height: 27px;
  padding: 0 5px 0 4px;
  color: #fff;
  font-size: 14px;
  font-weight: bold;
  background: linear-gradient(#0a5be0, #0a60f0 18%, #0053e0 55%, #0048c8 85%, #0a3c9e);
  border-radius: 6px 6px 0 0;
  text-shadow: 1px 1px 0 #0a2a80;
}

.title span {
  flex: 1;
}

.title.inactive {
  color: #d8e4f8;
  background: linear-gradient(#6f8cdc, #7b97e0 25%, #7391dd 70%, #6a85d2);
  text-shadow: none;
}

.close-btn {
  position: relative;
  flex: none;
  width: 19px;
  height: 18px;
  background: radial-gradient(circle at 30% 30%, #f0a080, #d8482a);
  border: 1px solid #fff;
  border-radius: 3px;
}

.close-btn::before, .close-btn::after {
  content: "";
  position: absolute;
  left: 3px;
  top: 7px;
  width: 11px;
  height: 2px;
  background: #fff;
  transform: rotate(45deg);
}

.close-btn::after {
  transform: rotate(-45deg);
}

.inactive .close-btn {
  background: radial-gradient(circle at 30% 30%, #c89aa0, #b86a70);
  border-color: #dde4f5;
}

.param-dialog {
  left: 238px;
  top: 296px;
  width: 510px;
  height: 344px;
  border: 3px solid #6b7fd0;
  border-top: 0;
  border-radius: 6px 6px 0 0;
}

.param-main {
  display: flex;
  gap: 6px;
  margin-top: 3px;
}

.table-panel {
  width: 247px;
  height: 241px;
  padding: 1px 2px;
  background: #fff;
  border: 1px solid #7f9db9;
}

.param-table {
  width: 241px;
  table-layout: fixed;
  border-collapse: collapse;
  font-size: 12px;
}

.param-table th, .param-table td {
  height: 19px;
  padding: 0 2px;
  border: 1px solid #bcbcbc;
  text-align: left;
  font-weight: normal;
  white-space: nowrap;
}

.param-table th {
  height: 18px;
  text-align: center;
  background: linear-gradient(#fbfaf6, #e8e5d8);
}

.param-table th.no, .param-table td.no {
  width: 21px;
  text-align: center;
  background: linear-gradient(#fbfaf6, #e8e5d8);
}

.param-table th.hot {
  width: 111px;
  color: #5a0a8a;
  background: linear-gradient(#fde3ae, #f0b45e);
}

.param-table td.no.current {
  background: #ffc97a;
  color: #7a2a00;
}

.cell-edit {
  display: flex;
  align-items: center;
  justify-content: space-between;
}

.dots {
  width: 16px;
  height: 16px;
  line-height: 11px;
  text-align: center;
  font-size: 12px;
  background: linear-gradient(#fff, #d8e4f4);
  border: 1px solid #2a5a8a;
  border-radius: 3px;
}

.group {
  min-width: 0;
  margin: 0;
  padding: 0;
  border: 1px solid #d0d0bf;
  border-radius: 4px;
}

.group legend {
  padding: 0;
  color: #0046d5;
  line-height: 12px;
}

.node-group {
  width: 247px;
  height: 241px;
  padding: 2px;
}

.node-group legend {
  margin-left: 6px;
}

.node-pic {
  background: #000;
}

.note {
  margin: 13px 0 0 8px;
  line-height: 12px;
  white-space: nowrap;
}

.param-foot {
  display: flex;
  align-items: center;
  margin-top: 14px;
  padding-left: 8px;
  gap: 15px;
}

.check {
  display: flex;
  align-items: center;
  gap: 3px;
  width: 309px;
  margin-top: 5px;
}

.check i {
  width: 13px;
  height: 13px;
  background: #fff;
  border: 1px solid #1c5180;
}

.xp-btn {
  flex: none;
  width: 72px;
  height: 23px;
  line-height: 21px;
  text-align: center;
  background: linear-gradient(#fff, #f4f3ee 80%, #dcd8c8);
  border: 1px solid #003c74;
  border-radius: 3px;
}

.xp-btn.focus {
  outline: 1px dotted #333;
  outline-offset: -3px;
  box-shadow: inset 0 0 0 2px #c4d6f4;
}

/* Drawings */
.w {
  fill: none;
  stroke: #fff;
  stroke-width: 1;
  shape-rendering: crispEdges;
}

.c2 {
  fill: none;
  stroke: #00ffff;
  stroke-width: 2;
  shape-rendering: crispEdges;
}

.c3 {
  fill: none;
  stroke: #00ffff;
  stroke-width: 3;
  shape-rendering: crispEdges;
}

.hook {
  fill: #00ffff;
}

.label {
  fill: #fff;
  font-size: 11px;
  text-anchor: middle;
  dominant-baseline: central;
  paint-order: stroke;
  stroke: #008080;
  stroke-width: 2px;
}

.node-pic .label {
  stroke: #000;
}

.label.red {
  fill: #ff0000;
  font-size: 13px;
  font-weight: bold;
}

.label.green {
  fill: #00d000;
}

.t10 {
  font-size: 10px;
  stroke-width: 0;
}

.t13 {
  font-size: 13px;
  stroke-width: 0;
}

.t14 {
  font-size: 14px;
  stroke-width: 0;
}

.t15 {
  font-size: 15px;
}

.t16 {
  font-size: 16px;
  stroke-width: 0;
}

.t17 {
  font-size: 17px;
  stroke-width: 0;
}

.label.red.t18, .t18 {
  font-size: 18px;
  font-weight: normal;
}

.t25 {
  font-size: 25px;
}

/* Shape picker */
.shape-dialog {
  left: 795px;
  top: 142px;
  width: 497px;
  height: 551px;
  border: 3px solid #0a4fd0;
  border-top: 0;
  border-radius: 6px 6px 0 0;
}

.shape-dialog .close-btn {
  margin-left: auto;
}

.shape-group {
  height: 475px;
  margin: 1px 0 0 4px;
  padding: 0 0 0 3px;
}

.shape-group legend {
  margin-left: 4px;
}

.shape-grid {
  display: grid;
  grid-template-columns: repeat(3, 154px);
  grid-auto-rows: 149px;
  gap: 3px 4px;
  margin-top: 6px;
}

.shape {
  padding: 3px 6px;
  border: 1px solid;
  border-color: #fff #aca899 #aca899 #fff;
}

.shape svg {
  background: #008080;
}

.shape.selected {
  margin: 1px 0 0 1px;
  padding: 0;
  border-style: solid;
  border-color: #ff0000;
  border-width: 3px 7px 4px 6px;
}

.shape-foot {
  display: flex;
  gap: 34px;
  margin-top: 15px;
  padding-left: 299px;
}

/* Network meter */
.meter {
  position: absolute;
  left: 915px;
  top: 663px;
  display: flex;
  width: 107px;
  height: 48px;
}

.meter-ball {
  position: absolute;
  left: 0;
  top: 0;
  display: flex;
  align-items: center;
  justify-content: center;
  width: 48px;
  height: 48px;
  color: #fff;
  font-size: 15px;
  font-family: "Liberation Sans", sans-serif;
  background: radial-gradient(circle at 50% 70%, #ff9a3a 45%, #f07f26 70%, #9a4a2a 92%);
  border: 3px solid #e8e8e8;
  border-radius: 50%;
  box-shadow: 0 0 0 1px #9a9a9a;
}

.meter-pill {
  display: flex;
  flex-direction: column;
  gap: 3px;
  width: 85px;
  height: 48px;
  margin: 5px 0 0 22px;
  padding: 6px 10px 0 33px;
  background: linear-gradient(#f8f8f8, #dcdcdc);
  border: 1px solid #b8b8b8;
  border-radius: 24px;
}

.rate {
  display: flex;
  align-items: center;
  justify-content: space-between;
  font-family: "Liberation Sans", sans-serif;
  font-size: 10px;
  line-height: 12px;
}

.rate i {
  width: 0;
  height: 0;
  border-left: 4px solid transparent;
  border-right: 4px solid transparent;
}

.rate .up {
  border-bottom: 8px solid #d84a3a;
}

.rate .down {
  border-top: 8px solid #2a8a4a;
}
```
